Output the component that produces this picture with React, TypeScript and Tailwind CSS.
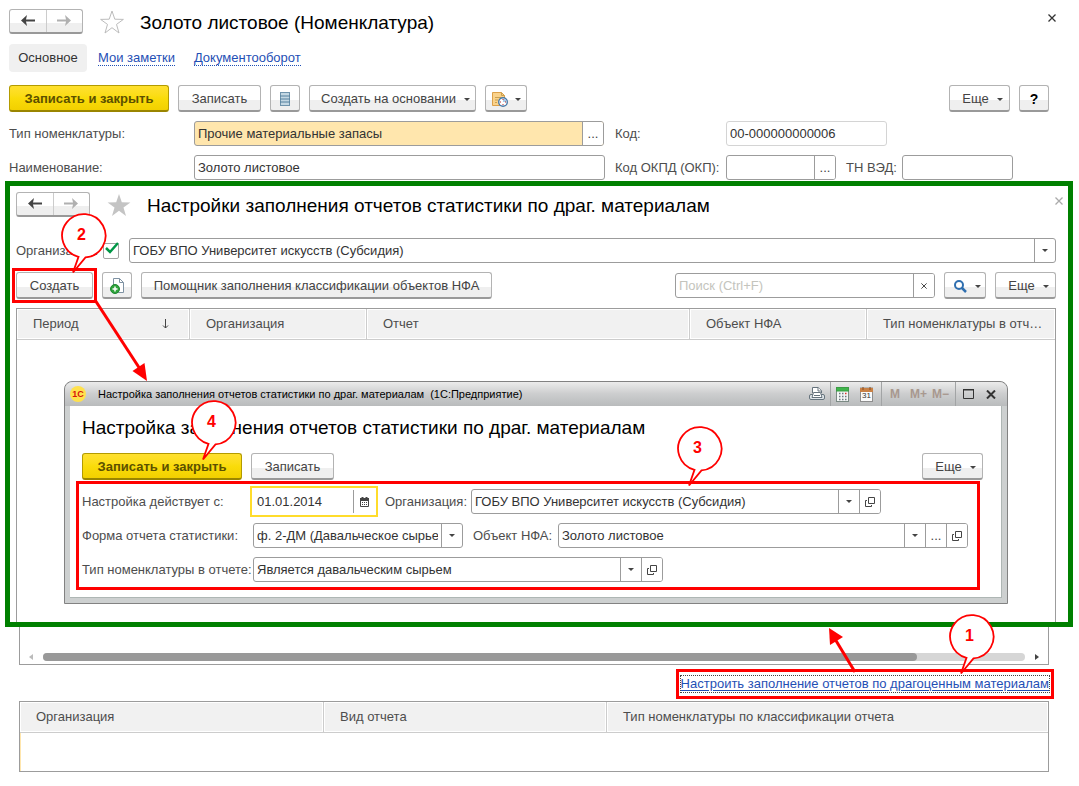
import { useState, type ReactNode } from "react";
import clsx from "clsx";

const fieldText = "text-[13px] text-[#333333] outline-none";

function Caret() {
  return (
    <svg className="h-[3px] w-[6px] shrink-0" viewBox="0 0 6 3" fill="currentColor">
      <path d="M0 0h6L3 3z" />
    </svg>
  );
}

function CloseIcon({ className }: { className?: string }) {
  return (
    <svg className={className} viewBox="0 0 8 8" fill="none" stroke="currentColor" strokeWidth="1.300">
      <path d="M0.5 0.5l7 7M7.5 0.5l-7 7" />
    </svg>
  );
}

function OpenIcon() {
  return (
    <svg className="h-[10px] w-[10px] shrink-0" viewBox="0 0 10 10" fill="none" stroke="currentColor">
      <path d="M3.5 0.5h6v6h-6z" />
      <path d="M2 3.5H0.5v6h6V8" />
    </svg>
  );
}

function Button({
  children,
  className,
  primary,
  label,
}: {
  children: ReactNode;
  className?: string;
  primary?: boolean;
  label?: string;
}) {
  return (
    <button
      type="button"
      aria-label={label}
      className={clsx(
        "flex h-[27px] shrink-0 items-center justify-center rounded-[3px] border border-b-2 pt-0.5 whitespace-nowrap",
        primary
          ? "border-[#b39b00] border-b-[#9a8500] bg-linear-to-b from-[#ffe02e] via-[#fadc0a] to-[#f2d000] font-bold text-[#5c5000]"
          : "border-[#b3b3b3] border-b-[#999999] bg-linear-to-b from-white from-60% to-[#efefef] to-60% text-[#444444]",
        className,
      )}
    >
      {children}
    </button>
  );
}

function NavButtons() {
  return (
    <div className="mb-0.5 flex h-[25px] w-[74px] shrink-0 rounded-[3px] border border-b-2 border-[#b3b3b3] border-b-[#999999] bg-linear-to-b from-white from-60% to-[#efefef] to-60%">
      <button type="button" aria-label="Назад" className="flex flex-1 items-center justify-center border-r border-[#cccccc] text-[#444444]">
        <svg className="h-[11px] w-[14px]" viewBox="0 0 14 11" fill="currentColor">
          <path d="M0 5.5L6 0L5 4.5H14V6.5H5L6 11Z" />
        </svg>
      </button>
      <button type="button" aria-label="Вперед" className="flex flex-1 items-center justify-center text-[#b0b0b0]">
        <svg className="h-[11px] w-[14px]" viewBox="0 0 14 11" fill="currentColor">
          <path d="M14 5.5L8 0L9 4.5H0V6.5H9L8 11Z" />
        </svg>
      </button>
    </div>
  );
}

function Star({ filled }: { filled?: boolean }) {
  return (
    <button type="button" aria-label="В избранное" className="ml-[17px] shrink-0">
      <svg
        className={clsx("h-6 w-6", filled ? "fill-[#c4c4c4]" : "fill-none stroke-[#bcbcbc]")}
        viewBox="0 0 24 24"
      >
        <path d="M12 1L14.8 9.2L23.4 9.4L16.5 14.4L19 23L12 17.700L5 23L7.500 14.4L0.600 9.4L9.2 9.2Z" />
      </svg>
    </button>
  );
}

function Field({ children, className }: { children: ReactNode; className?: string }) {
  return (
    <div className={clsx("flex h-[25px] overflow-hidden rounded-[3px] border border-[#9c9c9c]", className)}>
      {children}
    </div>
  );
}

function Cell({ children, label }: { children: ReactNode; label: string }) {
  return (
    <button
      type="button"
      aria-label={label}
      className="flex w-[21px] shrink-0 items-center justify-center border-l border-[#9c9c9c] bg-white text-[#444444]"
    >
      {children}
    </button>
  );
}

function Combo({ id, value, className, children }: { id: string; value: string; className?: string; children?: ReactNode }) {
  return (
    <Field className={className}>
      <select id={id} className={clsx(fieldText, "min-w-0 flex-1 appearance-none px-[3px]")}>
        <option>{value}</option>
      </select>
      <span className="pointer-events-none flex w-[21px] shrink-0 items-center justify-center border-l border-[#9c9c9c] text-[#444444]">
        <Caret />
      </span>
      {children}
    </Field>
  );
}

function Callout({ n, className }: { n: number; className: string }) {
  return (
    <div className={clsx("pointer-events-none absolute z-20 h-[61px] w-[46px]", className)}>
      <svg className="absolute inset-0" viewBox="0 0 46 61" fill="white" stroke="#ff0000" strokeWidth="1.8">
        <path d="M17.5 43.8A21.7 21.7 0 1 1 24.5 44.4L12 59.5Z" />
      </svg>
      <span className="absolute top-[10px] left-0 w-[41px] text-center text-base leading-6 font-bold text-[#ff0000]">{n}</span>
    </div>
  );
}

function HeadCell({ children, className }: { children: ReactNode; className?: string }) {
  return (
    <th
      className={clsx(
        "h-[31px] truncate border-b border-[#cccccc] bg-[#f1f1f1] pr-2 pl-4 text-left font-normal shadow-[inset_0_0_0_1px_white] not-last:border-r",
        className,
      )}
    >
      {children}
    </th>
  );
}

function SettingsWindow() {
  return (
    <section className="mx-[47px] mt-[41px] rounded-t-lg border border-[#828282] bg-[#cdd0d0] px-[5px] pb-[5px]">
      <div className="-mx-[5px] flex h-6 items-center rounded-t-lg bg-linear-to-b from-[#ececec] via-[#cccdce] to-[#b9bbbc] pr-[11px] pl-[5px]">
        <span className="flex h-4 w-4 items-center justify-center rounded-full bg-[#ffe14d] text-[9px] leading-none font-bold text-[#d8150a]">
          1С
        </span>
        <span className="ml-3 flex-1 text-[11px] whitespace-pre text-black">
          Настройка заполнения отчетов статистики по драг. материалам  (1С:Предприятие)
        </span>
        <div className="flex h-full items-center text-[#a8988f]">
          <button type="button" aria-label="Печать" className="mr-[5px]">
            <svg className="h-4 w-4" viewBox="0 0 16 16" fill="white" stroke="#66737d">
              <path d="M3.5 7V1.5H9L12.500 4.500V7" />
              <path d="M9 1.5V5H12.5" />
              <rect x="0.500" y="8.500" width="15" height="5" rx="1.500" fill="#dfe5e9" />
              <path d="M4.500 6.500H11.500L13 11.500H3Z" />
              <path d="M5 9.500H11" />
            </svg>
          </button>
          <span className="h-full w-px bg-[#a2a4a5]" />
          <button type="button" aria-label="Калькулятор" className="mx-[5px]">
            <svg className="h-[15px] w-[13px]" viewBox="0 0 13 15">
              <rect x="0.5" y="0.5" width="12" height="14" fill="#f4f6f6" stroke="#7b8a84" />
              <rect x="0.500" y="0.500" width="12" height="3.500" fill="#3fb54b" stroke="#3b9b45" />
              <path d="M3 6.500h1.500M6 6.500h1.500M3 9.500h1.500M6 9.500h1.500M9 9.500h1.500M3 12.500h1.500M6 12.500h1.500M9 12.500h1.500" stroke="#6b7780" strokeWidth="1.500" />
              <path d="M9 6.500h1.500" stroke="#e0332a" strokeWidth="1.500" />
            </svg>
          </button>
          <button type="button" aria-label="Календарь" className="relative mr-2 ml-[6px] h-[15px] w-[13px]">
            <svg className="absolute inset-0 h-[15px] w-[13px]" viewBox="0 0 13 15">
              <rect x="0.500" y="1" width="12" height="13.500" fill="#fafafa" stroke="#8d8d8d" />
              <rect x="0" y="1" width="13" height="4" fill="#c98145" />
              <path d="M3 0v3M10 0v3" stroke="#8a4b1d" />
            </svg>
            <span className="absolute inset-x-0 bottom-[2px] text-center text-[8px] leading-none text-[#333333]">31</span>
          </button>
          <span className="h-full w-px bg-[#a2a4a5]" />
          <button type="button" className="ml-2 text-[12px] font-bold">M</button>
          <button type="button" className="ml-[10px] text-[12px] font-bold">M+</button>
          <button type="button" className="mr-[6px] ml-[5px] text-[12px] font-bold">M−</button>
          <span className="h-full w-px bg-[#a2a4a5]" />
          <button type="button" aria-label="Развернуть" className="ml-[7px]">
            <svg className="h-[10px] w-[11px]" viewBox="0 0 11 10" fill="none" stroke="#333333">
              <path d="M0.5 1V9.500H10.500V1M0 1H11" />
              <path d="M0 0.500H11" strokeWidth="1" />
            </svg>
          </button>
          <button type="button" aria-label="Закрыть" className="ml-3">
            <svg className="h-[9px] w-[10px]" viewBox="0 0 10 9" stroke="#333333" strokeWidth="2">
              <path d="M1 0.500L9 8.500M9 0.500L1 8.500" />
            </svg>
          </button>
        </div>
      </div>

      <div className="border-r border-b border-[#aeb6b4] bg-white pt-[10px] pr-[21px] pb-[7px] pl-[6px]">
        <h2 className="pl-[6px] text-[19px] leading-6 text-black">
          Настройка заполнения отчетов статистики по драг. материалам
        </h2>
        <div className="mt-[13px] flex gap-[9px] pl-[6px]">
          <div className="relative">
            <Button primary className="w-[160px]">Записать и закрыть</Button>
            <Callout n={4} className="-top-[53px] left-[109px]" />
          </div>
          <Button className="w-[83px]">Записать</Button>
          <Button className="-mr-[3px] ml-auto w-[61px] gap-2 pl-[6px]">Еще <Caret /></Button>
        </div>

        <div className="relative mt-px flex flex-col gap-[9px] border-[3px] border-[#ff0000] px-[3px] py-[5px]">
          <Callout n={3} className="-top-[58px] left-[598px]" />
          <div className="flex items-center">
            <label htmlFor="date" className="w-[171px] shrink-0">Настройка действует с:</label>
            <div className="flex h-[25px] w-[122px] shrink-0 items-center bg-white outline-2 outline-offset-1 outline-[#ffdc2b]">
              <input id="date" defaultValue="01.01.2014" className={clsx(fieldText, "w-[100px] pl-1")} />
              <button type="button" aria-label="Выбрать дату" className="flex h-[23px] flex-1 items-center justify-center border-l border-[#9c9c9c] text-[#444444]">
                <svg className="h-[10px] w-[9px]" viewBox="0 0 9 10">
                  <path d="M0.5 2V9.500H8.500V2" fill="none" stroke="currentColor" />
                  <path d="M0 1h9v3H0zM1.500 0h2v2h-2zM5.500 0h2v2h-2z" fill="currentColor" />
                  <path d="M2 5.500h5M2 7.500h5" stroke="currentColor" strokeDasharray="1 1" />
                </svg>
              </button>
            </div>
            <label htmlFor="dlg-org" className="ml-[10px] w-[86px] shrink-0">Организация:</label>
            <Combo id="dlg-org" value="ГОБУ ВПО Университет искусств (Субсидия)" className="mr-[93px] flex-1">
              <Cell label="Открыть"><OpenIcon /></Cell>
            </Combo>
          </div>
          <div className="flex items-center">
            <label htmlFor="report-form" className="w-[171px] shrink-0">Форма отчета статистики:</label>
            <Combo id="report-form" value="ф. 2-ДМ (Давальческое сырье)" className="w-[210px] shrink-0" />
            <label htmlFor="nfa" className="ml-[10px] w-[85px] shrink-0">Объект НФА:</label>
            <Combo id="nfa" value="Золото листовое" className="mr-[6px] flex-1">
              <Cell label="Выбрать">...</Cell>
              <Cell label="Открыть"><OpenIcon /></Cell>
            </Combo>
          </div>
          <div className="flex items-center">
            <label htmlFor="report-type" className="w-[171px] shrink-0">Тип номенклатуры в отчете:</label>
            <Combo id="report-type" value="Является давальческим сырьем" className="w-[410px]">
              <Cell label="Открыть"><OpenIcon /></Cell>
            </Combo>
          </div>
        </div>
      </div>
    </section>
  );
}

function StatisticsPanel() {
  const [checked, setChecked] = useState(true);

  return (
    <section className="mt-px mr-[6px] ml-[5px] border-5 border-[#008000] bg-white pt-[6px] pr-3 pl-[6px]">
      <div className="flex h-[26px] items-center">
        <NavButtons />
        <Star filled />
        <h2 className="ml-4 flex-1 pt-0.5 text-[19px] text-black">Настройки заполнения отчетов статистики по драг. материалам</h2>
        <button type="button" aria-label="Закрыть" className="-mr-[7px] mb-2 text-[#aaaaaa]">
          <CloseIcon className="h-2 w-2" />
        </button>
      </div>

      <div className="mt-5 flex items-center">
        <label htmlFor="org" className="w-[87px]">Организация:</label>
        <span className="relative mr-[10px] h-4 w-4">
          <input
            type="checkbox"
            aria-label="Отбор по организации"
            checked={checked}
            onChange={(e) => setChecked(e.target.checked)}
            className="block h-4 w-4 appearance-none rounded-[2px] border border-[#a3a3a3] bg-white"
          />
          {checked && (
            <svg className="pointer-events-none absolute -top-px left-[2px] h-3 w-[14px]" viewBox="0 0 14 12" fill="none" stroke="#009646" strokeWidth="2.500">
              <path d="M1 6L5 10L13 1" />
            </svg>
          )}
        </span>
        <Combo id="org" value="ГОБУ ВПО Университет искусств (Субсидия)" className="flex-1" />
      </div>

      <div className="mt-[9px] flex items-center gap-[9px]">
        <div className="relative">
          <Button className="w-[77px]">Создать</Button>
          <span className="pointer-events-none absolute -inset-1 border-3 border-[#ff0000]" />
          <Callout n={2} className="-top-[59px] left-[45px]" />
          {/* arrow to the dialog that the button opens */}
          <svg className="pointer-events-none absolute top-7 left-[77px] z-10 h-[82px] w-[56px]" viewBox="0 0 56 82">
            <path d="M2 0L47 69" stroke="#ff0000" strokeWidth="3" />
            <path d="M54 81L51.500 63L39.500 71Z" fill="#ff0000" />
          </svg>
        </div>
        <Button label="Создать копированием" className="w-[30px]">
          <svg className="h-4 w-[14px]" viewBox="0 0 14 16">
            <path d="M3.500 0.500H9.500L13.500 4.500V14.500H3.500Z" fill="white" stroke="#7f92a3" />
            <path d="M9.500 0.500V4.500H13.500" fill="none" stroke="#7f92a3" />
            <circle cx="5" cy="11" r="4.500" fill="#2fa33b" stroke="#1d8730" />
            <path d="M2.500 11H7.500M5 8.500V13.500" stroke="white" strokeWidth="1.500" />
          </svg>
        </Button>
        <Button className="w-[351px]">Помощник заполнения классификации объектов НФА</Button>
        <Field className="ml-auto w-[260px]">
          <input
            aria-label="Поиск"
            placeholder="Поиск (Ctrl+F)"
            className={clsx(fieldText, "min-w-0 flex-1 px-[3px] placeholder:text-[#c4c4bd]")}
          />
          <Cell label="Очистить"><CloseIcon className="h-[6px] w-[6px]" /></Cell>
        </Field>
        <Button label="Найти" className="w-[42px] gap-2 pl-1">
          <svg className="h-[13px] w-[14px]" viewBox="0 0 14 13" fill="none" stroke="#2f6fb0">
            <circle cx="6" cy="5" r="4" strokeWidth="2" />
            <path d="M8.500 7.500L13 12" strokeWidth="2.500" />
          </svg>
          <Caret />
        </Button>
        <Button className="w-[61px] gap-2 pl-[6px]">Еще <Caret /></Button>
      </div>

      <div className="mt-[9px] border border-b-0 border-[#9c9c9c] pb-[18px]">
        <table className="w-full table-fixed border-separate border-spacing-0">
          <thead>
            <tr>
              <HeadCell className="w-[173px]">
                <span className="flex items-center justify-between pr-3">
                  Период
                  <svg className="h-[10px] w-[7px]" viewBox="0 0 7 10" fill="none" stroke="#444444">
                    <path d="M3.500 0V9M1 6.500L3.500 9L6 6.500" />
                  </svg>
                </span>
              </HeadCell>
              <HeadCell className="w-[177px]">Организация</HeadCell>
              <HeadCell>Отчет</HeadCell>
              <HeadCell className="w-[177px]">Объект НФА</HeadCell>
              <HeadCell className="w-[188px]">Тип номенклатуры в отчете</HeadCell>
            </tr>
          </thead>
        </table>
        <SettingsWindow />
      </div>
    </section>
  );
}

export default function App() {
  return (
    <main className="min-h-screen bg-white pt-2 font-['Liberation_Sans',Arial,sans-serif] text-[13px] leading-4 text-[#4d4d4d]">
      <header className="pr-[30px] pl-[9px]">
        <div className="-mr-[7px] flex h-7 items-center">
          <NavButtons />
          <Star />
          <h1 className="ml-4 flex-1 pt-0.5 text-[19px] text-black">Золото листовое (Номенклатура)</h1>
          <button type="button" aria-label="Закрыть" className="mb-2 text-[#333333]">
            <CloseIcon className="h-2 w-2" />
          </button>
        </div>

        <nav className="mt-2 flex h-7 items-center">
          <a href="#main" className="mr-[11px] flex h-7 w-[78px] items-center justify-center rounded-[4px] bg-[#f0f0f0] text-[#333333]">
            Основное
          </a>
          <a href="#notes" className="mr-[19px] border-b border-dotted border-[#1f4fb5] leading-[15px] text-[#1f4fb5]">Мои заметки</a>
          <a href="#docs" className="border-b border-dotted border-[#1f4fb5] leading-[15px] text-[#1f4fb5]">Документооборот</a>
        </nav>

        <div className="mt-[13px] flex gap-[9px]">
          <Button primary className="w-[160px]">Записать и закрыть</Button>
          <Button className="w-[83px]">Записать</Button>
          <Button label="Список" className="w-[30px]">
            <svg className="h-[14px] w-[10px]" viewBox="0 0 10 14">
              <rect x="0.500" y="0.500" width="9" height="13" fill="#c3d7e3" stroke="#6f93ac" />
              <path d="M0 4H10M0 7H10M0 10H10" stroke="#54809e" />
            </svg>
          </Button>
          <Button className="w-[167px] gap-2 pl-[6px]">Создать на основании <Caret /></Button>
          <Button label="Задачи" className="w-[42px] gap-[7px]">
            <svg className="h-[15px] w-[16px]" viewBox="0 0 16 15">
              <path d="M0.500 0.500H9.500L12.500 3.500V13.500H0.500Z" fill="#fad28b" stroke="#dba04a" />
              <path d="M9.500 0.500V3.500H12.500M3 5.500H9M3 8H6M3 10.500H5" fill="none" stroke="#c9a04f" />
              <circle cx="11" cy="10" r="4.300" fill="white" stroke="#4879a8" strokeWidth="1.400" />
              <path d="M11 10V6.500A3.500 3.500 0 0 1 14.500 10Z" fill="#a9cbe8" />
              <path d="M11 7v1M11 12v1M8 10h1M13 10h1" stroke="#c22a2a" />
            </svg>
            <Caret />
          </Button>
          <Button className="ml-auto w-[61px] gap-2 pl-[6px]">Еще <Caret /></Button>
          <Button className="w-[30px] text-sm font-bold text-black">?</Button>
        </div>

        <div className="mt-[9px] flex items-center">
          <label htmlFor="kind" className="w-[185px] shrink-0">Тип номенклатуры:</label>
          <Field className="mr-[11px] flex-1 bg-[#ffe6ad]">
            <input id="kind" defaultValue="Прочие материальные запасы" className={clsx(fieldText, "min-w-0 flex-1 px-[3px]")} />
            <Cell label="Выбрать">...</Cell>
          </Field>
          <div className="flex w-[434px] shrink-0 items-center">
            <label htmlFor="code" className="w-[111px] shrink-0">Код:</label>
            <Field className="w-[161px] border-[#d4d4d4]">
              <input id="code" defaultValue="00-000000000006" className={clsx(fieldText, "min-w-0 flex-1 px-[3px]")} />
            </Field>
          </div>
        </div>

        <div className="mt-[9px] flex items-center">
          <label htmlFor="name" className="w-[185px] shrink-0">Наименование:</label>
          <Field className="mr-[10px] flex-1">
            <input id="name" defaultValue="Золото листовое" className={clsx(fieldText, "min-w-0 flex-1 px-[3px]")} />
          </Field>
          <div className="flex w-[434px] shrink-0 items-center">
            <label htmlFor="okpd" className="w-[111px] shrink-0">Код ОКПД (ОКП):</label>
            <Field className="w-[110px]">
              <input id="okpd" className={clsx(fieldText, "min-w-0 flex-1 px-[3px]")} />
              <Cell label="Выбрать">...</Cell>
            </Field>
            <label htmlFor="tnved" className="ml-[10px] w-[56px] shrink-0">ТН ВЭД:</label>
            <Field className="w-[111px]">
              <input id="tnved" className={clsx(fieldText, "min-w-0 flex-1 px-[3px]")} />
            </Field>
          </div>
        </div>
      </header>

      <StatisticsPanel />

      <div className="mr-[30px] ml-[19px]">
        <div className="flex h-[38px] items-end border border-t-0 border-[#9c9c9c] px-[9px] pb-[3px]">
          <svg className="mb-px h-[6px] w-1" viewBox="0 0 4 6" fill="#bbbbbb">
            <path d="M4 0V6L0 3Z" />
          </svg>
          <div className="mx-[10px] h-2 flex-1 rounded-full bg-[#d6d6d6]">
            <div className="h-2 w-[89%] rounded-full bg-[#999999]" />
          </div>
          <svg className="mb-px h-[6px] w-1" viewBox="0 0 4 6" fill="#444444">
            <path d="M0 0V6L4 3Z" />
          </svg>
        </div>

        <div className="mt-1 flex justify-end">
          <div className="relative -mr-[5px] border-3 border-[#ff0000] px-[2px] py-1">
            <a href="#settings" className="block leading-4 text-[#1f4fb5] underline underline-offset-2 outline-1 outline-dotted outline-[#444444]">
              Настроить заполнение отчетов по драгоценным материалам
            </a>
            <Callout n={1} className="-top-[58px] right-[56px]" />
            {/* arrow to the panel that the link opens */}
            <svg className="pointer-events-none absolute -top-[45px] right-[194px] h-[46px] w-[30px]" viewBox="0 0 30 46">
              <path d="M8 12L28 45" stroke="#ff0000" strokeWidth="3" />
              <path d="M2 1L3 18L16 10Z" fill="#ff0000" />
            </svg>
          </div>
        </div>

        <div className="mt-0.5 border border-[#9c9c9c]">
          <table className="w-full table-fixed border-separate border-spacing-0">
            <thead>
              <tr>
                <HeadCell className="w-[304px]">Организация</HeadCell>
                <HeadCell className="w-[283px]">Вид отчета</HeadCell>
                <HeadCell>Тип номенклатуры по классификации отчета</HeadCell>
              </tr>
            </thead>
            <tbody>
              <tr>
                <td colSpan={3} className="h-[38px] border-l border-[#ffe6ad]" />
              </tr>
            </tbody>
          </table>
        </div>
      </div>
    </main>
  );
}
